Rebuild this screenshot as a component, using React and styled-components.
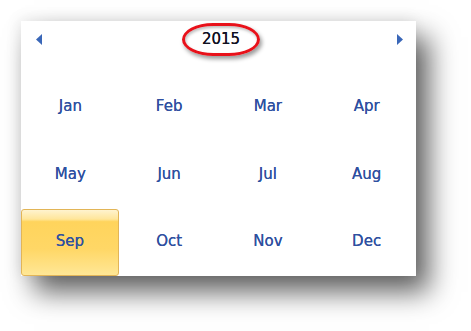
import React from "react";
import styled, { createGlobalStyle } from "styled-components";

const months = ["Jan", "Feb", "Mar", "Apr", "May", "Jun", "Jul", "Aug", "Sep", "Oct", "Nov", "Dec"];

const GlobalStyle = createGlobalStyle`
  html, body {
    margin: 0;
    padding: 0;
    background: #ffffff;
  }
  body {
    font-family: "DejaVu Sans", Tahoma, sans-serif;
    overflow: hidden;
  }
`;

export default () => {
    return (
        <Page>
            <GlobalStyle />
            <Calendar>
                <Header>
                    <Arrow aria-label="previous">
                        <svg width="7" height="11" viewBox="0 0 7 11">
                            <path d="M6 0 L0 5.5 L6 11 Z" fill="#3a67b8" />
                        </svg>
                    </Arrow>
                    <Year>2015</Year>
                    <Arrow aria-label="next">
                        <svg width="7" height="11" viewBox="0 0 7 11">
                            <path d="M1 0 L7 5.5 L1 11 Z" fill="#3a67b8" />
                        </svg>
                    </Arrow>
                </Header>
                <Months>
                    {months.map((m) => (
                        <Month key={m} selected={m === "Sep"}>{m}</Month>
                    ))}
                </Months>
            </Calendar>
        </Page>
    );
};

const Page = styled.div`
  width: 471px;
  height: 331px;
  padding: 21px 0 0 21px;
  box-sizing: border-box;
`;
const Calendar = styled.div`
  width: 395px;
  height: 255px;
  background: #ffffff;
  display: flex;
  flex-direction: column;
  box-shadow: 13px 16px 26px rgba(0, 0, 0, 0.62), -2px -2px 14px rgba(0, 0, 0, 0.08);
`;
const Header = styled.div`
  height: 36px;
  display: flex;
  align-items: center;
  justify-content: space-between;
  padding: 0 13px 0 15px;
`;
const Arrow = styled.div`
  width: 7px;
  height: 11px;
  display: flex;
`;
const Year = styled.span`
  width: 72px;
  height: 27px;
  margin-left: 3px;
  display: flex;
  align-items: center;
  justify-content: center;
  font-size: 15px;
  color: #111122;
  text-shadow: 0 0 0.6px #111122;
  border: 3px solid #e8111a;
  border-radius: 40% / 50%;
  box-shadow: 2px 3px 4px rgba(0, 0, 0, 0.4), inset 1px 2px 3px rgba(0, 0, 0, 0.25);
`;
const Months = styled.div`
  margin-top: 16px;
  flex: 1;
  display: grid;
  grid-template-columns: repeat(4, 1fr);
  grid-template-rows: 68px 68px 67px;
`;
const Month = styled.div`
  display: flex;
  align-items: center;
  justify-content: center;
  padding-bottom: 3px;
  margin-right: ${(p) => (p.selected ? "1px" : "0")};
  font-size: 15px;
  color: #2f50a0;
  text-shadow: 0 0 0.6px #2f50a0;
  border-radius: 3px;
  border: 1px solid ${(p) => (p.selected ? "#e2b557" : "transparent")};
  background: ${(p) =>
    p.selected
      ? "linear-gradient(to bottom, #fff3cf 0%, #ffe69a 14%, #ffd45c 18%, #ffd766 60%, #ffe796 100%)"
      : "transparent"};
`;
